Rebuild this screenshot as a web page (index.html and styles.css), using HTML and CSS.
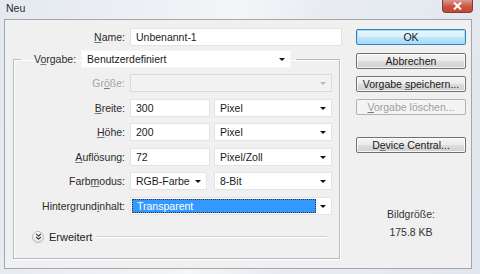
FILE: index.html
```html
<!DOCTYPE html>
<html lang="de">
<head>
<meta charset="utf-8">
<title>Neu</title>
<link rel="stylesheet" href="styles.css">
</head>
<body>
<div class="window">
  <div class="titlebar">
    <span class="title">Neu</span>
    <div class="close">
      <svg width="9" height="8" viewBox="0 0 9 8"><path d="M1 0.5 L8 7.5 M8 0.5 L1 7.5" stroke="#fff" stroke-width="2"/></svg>
    </div>
  </div>
  <div class="panel">
    <div class="main">
      <div class="row name-row">
        <span class="lbl lbl-name"><u>N</u>ame:</span>
        <div class="field w-name"><span>Unbenannt-1</span></div>
      </div>
      <fieldset class="group">
        <legend class="legend">
          <span class="lbl-inline">V<u>o</u>rgabe:</span>
          <div class="field select plain w-preset"><span>Benutzerdefiniert</span><i class="arrow"></i></div>
        </legend>
        <div class="rows">
          <div class="row">
            <span class="lbl disabled">Gr<u>ö</u>ße:</span>
            <div class="field select disabled-field w-full"><i class="arrow grey"></i></div>
          </div>
          <div class="row">
            <span class="lbl"><u>B</u>reite:</span>
            <div class="pair">
              <div class="field w-num"><span>300</span></div>
              <div class="field select w-unit"><span>Pixel</span><i class="arrow"></i></div>
            </div>
          </div>
          <div class="row">
            <span class="lbl"><u>H</u>öhe:</span>
            <div class="pair">
              <div class="field w-num"><span>200</span></div>
              <div class="field select w-unit"><span>Pixel</span><i class="arrow"></i></div>
            </div>
          </div>
          <div class="row">
            <span class="lbl"><u>A</u>uflösung:</span>
            <div class="pair">
              <div class="field w-num"><span>72</span></div>
              <div class="field select w-unit"><span>Pixel/Zoll</span><i class="arrow"></i></div>
            </div>
          </div>
          <div class="row">
            <span class="lbl">Farb<u>m</u>odus:</span>
            <div class="pair wide-gap">
              <div class="field select w-mode"><span>RGB-Farbe</span><i class="arrow"></i></div>
              <div class="field select w-unit"><span>8-Bit</span><i class="arrow"></i></div>
            </div>
          </div>
          <div class="row">
            <span class="lbl">Hintergrund<u>i</u>nhalt:</span>
            <div class="field select w-full focus"><span class="hl">Transparent</span><i class="arrow"></i></div>
          </div>
        </div>
        <div class="advanced">
          <span class="adv-icon">
            <svg width="7" height="7" viewBox="0 0 7 7"><path d="M1 0.8 L3.5 3 L6 0.8 M1 3.8 L3.5 6 L6 3.8" fill="none" stroke="#333" stroke-width="1.1"/></svg>
          </span>
          <span class="adv-text">Erweitert</span>
          <span class="adv-line"></span>
        </div>
      </fieldset>
    </div>
    <div class="side">
      <div class="btn default b-ok"><span>OK</span></div>
      <div class="btn b-cancel"><span>Abbrechen</span></div>
      <div class="btn b-save"><span>Vorgabe <u>s</u>peichern...</span></div>
      <div class="btn disabled-btn b-del"><span><u>V</u>orgabe löschen...</span></div>
      <div class="btn b-device"><span>D<u>e</u>vice Central...</span></div>
      <div class="info">
        <div class="info-label">Bildgröße:</div>
        <div class="info-value">175.8 KB</div>
      </div>
    </div>
  </div>
</div>
</body>
</html>
```

FILE: styles.css
```css
* { box-sizing: border-box; }
html, body {
  margin: 0;
  padding: 0;
  width: 480px;
  height: 274px;
  overflow: hidden;
}
body {
  font-family: "Liberation Sans", Arial, sans-serif;
  font-size: 10.5px;
  color: #1e1e1e;
  white-space: nowrap;
}
u {
  text-decoration: underline;
  text-decoration-color: #777;
  text-underline-offset: 1px;
}

.window {
  width: 480px;
  height: 274px;
  background: linear-gradient(100deg, #e4e9ef 0%, #edf1f5 30%, #f4f6f8 45%, #e9edf2 60%, #e1e7ee 100%);
}
.titlebar {
  height: 19px;
  display: flex;
  justify-content: space-between;
  align-items: flex-start;
}
.title {
  padding: 2px 0 0 6px;
  color: #2a2a2a;
}
.close {
  width: 31px;
  height: 13px;
  margin-right: 7px;
  border: 1px solid #8b3a33;
  border-top: none;
  border-radius: 0 0 4px 4px;
  background: linear-gradient(#d99a8e, #c9543f 55%, #c24a36);
  display: flex;
  align-items: center;
  justify-content: center;
}

.panel {
  height: 250px;
  margin: 0 8px 0 4px;
  border: 1px solid #a3a7ab;
  background: #f0f0f0;
  padding-top: 8px;
  display: flex;
}
.main { width: 335px; }

.row {
  display: flex;
  align-items: center;
  gap: 5px;
  height: 18px;
}
.lbl {
  width: 111px;
  text-align: right;
  color: #2b2b2b;
  flex: none;
}
.lbl-name { width: 120px; }
.lbl.disabled { color: #a4a4a4; }

.field {
  height: 18px;
  background: #fff;
  border: 1px solid #e2e3e5;
  padding: 0 0 0 5px;
  display: flex;
  align-items: center;
  position: relative;
  color: #1a1a1a;
  flex: none;
}
.select { padding-right: 16px; }
.plain { border-color: #f6f6f6; }
.arrow {
  position: absolute;
  right: 5px;
  top: 7px;
  width: 0;
  height: 0;
  border-left: 3px solid transparent;
  border-right: 3px solid transparent;
  border-top: 3px solid #111;
}
.arrow.grey { border-top-color: #b8b8b8; }
.disabled-field { background: #f2f2f2; border-color: #dadada; }

.w-name { width: 212px; }
.w-preset { width: 210px; }
.w-full { width: 202px; }
.w-num { width: 80px; }
.w-unit { width: 118px; }
.w-mode { width: 77px; }

.pair { display: flex; gap: 4px; }
.pair.wide-gap { gap: 7px; }

.focus { padding-left: 1px; }
.hl {
  flex: 1;
  height: 14px;
  background: #3399ff;
  color: #fff;
  border: 1px dotted #333;
  padding-left: 4px;
  line-height: 12px;
  margin-right: -1px;
}

.group {
  margin: 4px 0 0 8px;
  width: 327px;
  height: 209px;
  border: 1px solid #b9bcbf;
  box-shadow: inset 1px 1px 0 #fff, 1px 1px 0 #fff;
  padding: 0;
}
.legend {
  margin-left: 7px;
  padding: 0 5px 0 13px;
  display: flex;
  align-items: center;
  gap: 5px;
  height: 18px;
}
.lbl-inline { color: #2b2b2b; }

.rows {
  padding-top: 6px;
  display: flex;
  flex-direction: column;
  gap: 6.6px;
}

.advanced {
  margin: 15px 12px 0 18px;
  height: 14px;
  display: flex;
  align-items: center;
}
.adv-icon {
  width: 12px;
  height: 12px;
  border-radius: 50%;
  border: 1px solid #b8b8b8;
  background: linear-gradient(#ffffff, #e4e4e4);
  display: flex;
  align-items: center;
  justify-content: center;
  flex: none;
}
.adv-text { margin-left: 5px; color: #222; font-size: 11px; }
.adv-line {
  flex: 1;
  margin-left: 4px;
  height: 2px;
  border-top: 1px solid #cfcfcf;
  border-bottom: 1px solid #fff;
}

.side {
  width: 110px;
  margin-left: 16px;
  display: flex;
  flex-direction: column;
}
.btn {
  height: 16px;
  border: 1px solid #707070;
  border-radius: 2px;
  background: linear-gradient(#f4f4f4 0%, #ebebeb 48%, #dddddd 52%, #cfcfcf 100%);
  box-shadow: inset 0 0 0 1px rgba(255,255,255,0.8);
  display: flex;
  align-items: center;
  justify-content: center;
  color: #1a1a1a;
}
.btn.default {
  border-color: #3c7fb1;
  background: linear-gradient(#eaf6fd 0%, #d9f0fc 48%, #bee6fd 52%, #a7d9f5 100%);
  box-shadow: inset 0 0 0 1px #9fe0ff;
}
.btn.disabled-btn {
  border-color: #adb2b5;
  background: #f4f4f4;
  color: #a0a0a0;
  box-shadow: none;
}
.b-ok { margin-top: 1px; }
.b-cancel { margin-top: 8px; }
.b-save { margin-top: 7px; }
.b-del { margin-top: 7px; }
.b-device { margin-top: 22px; }

.info {
  margin-top: 55px;
  display: flex;
  flex-direction: column;
  align-items: center;
  gap: 6px;
  color: #333;
}
```
